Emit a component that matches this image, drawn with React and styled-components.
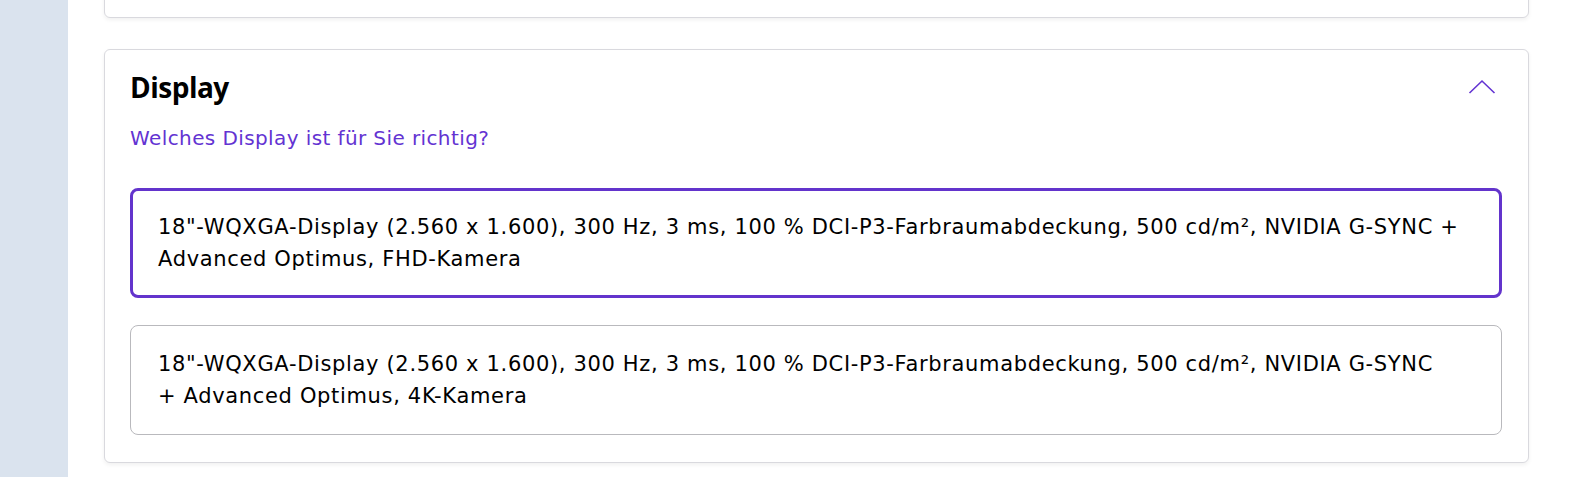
import React, { useState } from "react";
import styled, { createGlobalStyle } from "styled-components";

const GlobalStyle = createGlobalStyle`
  html, body {
    margin: 0;
    padding: 0;
    background: #ffffff;
    overflow: hidden;
  }
  body {
    font-family: "DejaVu Sans", "Open Sans", sans-serif;
    color: #000;
  }
`;

const Page = styled.div`
  display: flex;
  width: 1570px;
  height: 477px;
  overflow: hidden;
`;

const Sidebar = styled.div`
  width: 68px;
  flex-shrink: 0;
  background-color: #dae3ee;
`;

const Main = styled.div`
  flex: 1;
  display: flex;
  flex-direction: column;
  gap: 31px;
  padding: 0 41px 0 36px;
`;

const Card = styled.div`
  background: #ffffff;
  border: 1px solid #d9d9de;
  border-radius: 6px;
  box-shadow: 0 2px 4px rgba(0, 0, 0, 0.06);
`;

const PrevCard = styled(Card)`
  height: 60px;
  margin-top: -44px;
  flex-shrink: 0;
`;

const Section = styled(Card)`
  padding: 20px 26px 27px 25px;
`;

const Header = styled.div`
  display: flex;
  justify-content: space-between;
  align-items: center;
  height: 34px;
`;

const Title = styled.h2`
  margin: 0;
  font-family: "Open Sans", sans-serif;
  font-size: 28px;
  font-weight: 700;
  letter-spacing: -0.5px;
`;

const Toggle = styled.button`
  border: none;
  background: none;
  padding: 0;
  margin-right: 6px;
  width: 28px;
  height: 16px;
  display: flex;
  cursor: pointer;
`;

const Subtitle = styled.p`
  margin: 20px 0 0;
  font-size: 20px;
  letter-spacing: 0.4px;
  color: #6333d2;
  line-height: 28px;
`;

const Options = styled.div`
  margin-top: 36px;
  display: flex;
  flex-direction: column;
  gap: 27px;
`;

const Option = styled.div`
  border: ${(p) => (p.$selected ? "3px solid #6334cc" : "1px solid #b9b9bd")};
  border-radius: 8px;
  padding: ${(p) => (p.$selected ? "20px 25px" : "22px 27px")};
  font-size: 21px;
  letter-spacing: 0.66px;
  line-height: 32px;
  cursor: pointer;
`;

const options = [
  {
    id: "fhd",
    lines: [
      "18\"-WQXGA-Display (2.560 x 1.600), 300 Hz, 3 ms, 100 % DCI-P3-Farbraumabdeckung, 500 cd/m², NVIDIA G-SYNC +",
      "Advanced Optimus, FHD-Kamera",
    ],
  },
  {
    id: "4k",
    lines: [
      "18\"-WQXGA-Display (2.560 x 1.600), 300 Hz, 3 ms, 100 % DCI-P3-Farbraumabdeckung, 500 cd/m², NVIDIA G-SYNC",
      "+ Advanced Optimus, 4K-Kamera",
    ],
  },
];

const App = () => {
  const [selected, setSelected] = useState("fhd");
  return (
    <>
      <GlobalStyle />
      <Page>
        <Sidebar />
        <Main>
          <PrevCard />
          <Section>
            <Header>
              <Title>Display</Title>
              <Toggle aria-label="Einklappen">
                <svg width="28" height="16" viewBox="0 0 28 16" fill="none">
                  <path d="M1.5 14 L14 2 L26.5 14" stroke="#6333d2" strokeWidth="1.6" />
                </svg>
              </Toggle>
            </Header>
            <Subtitle>Welches Display ist für Sie richtig?</Subtitle>
            <Options>
              {options.map((o) => (
                <Option key={o.id} $selected={selected === o.id} onClick={() => setSelected(o.id)}>
                  {o.lines[0]}
                  <br />
                  {o.lines[1]}
                </Option>
              ))}
            </Options>
          </Section>
        </Main>
      </Page>
    </>
  );
};

export default App;
